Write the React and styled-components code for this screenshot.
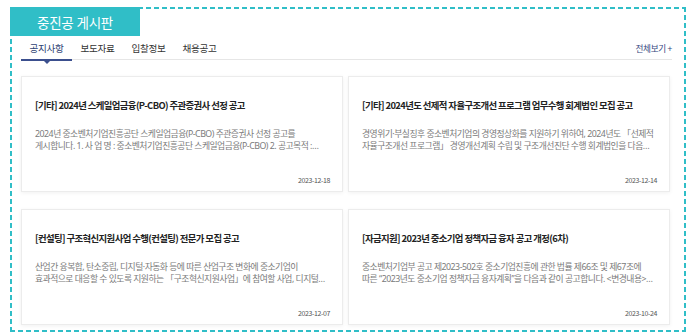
import React from 'react'
import styled, { createGlobalStyle } from 'styled-components'

const GlobalStyle = createGlobalStyle`
  html, body {
    margin: 0;
    padding: 0;
    background: #ffffff;
  }
  body {
    font-family: "Noto Sans CJK KR", "Noto Sans", sans-serif;
  }
`

const tabs = ['공지사항', '보도자료', '입찰정보', '채용공고']

const posts = [
    {
        title: '[기타] 2024년 스케일업금융(P-CBO) 주관증권사 선정 공고',
        text: '2024년 중소벤처기업진흥공단 스케일업금융(P-CBO) 주관증권사 선정 공고를 게시합니다. 1. 사 업 명 : 중소벤처기업진흥공단 스케일업금융(P-CBO) 2. 공고목적 : 스케일업금융 주관증권사 선정',
        date: '2023-12-18'
    },
    {
        title: '[기타] 2024년도 선제적 자율구조개선 프로그램 업무수행 회계법인 모집 공고',
        text: '경영위기·부실징후 중소벤처기업의 경영정상화를 지원하기 위하여, 2024년도 「선제적 자율구조개선 프로그램」 경영개선계획 수립 및 구조개선진단 수행 회계법인을 다음과 같이 모집합니다.',
        date: '2023-12-14'
    },
    {
        title: '[컨설팅] 구조혁신지원사업 수행(컨설팅) 전문가 모집 공고',
        text: '산업간 융복합, 탄소중립, 디지털·자동화 등에 따른 산업구조 변화에 중소기업이 효과적으로 대응할 수 있도록 지원하는 「구조혁신지원사업」에 참여할 사업, 디지털 전환 컨설팅 전문가를 모집합니다.',
        date: '2023-12-07'
    },
    {
        title: '[자금지원] 2023년 중소기업 정책자금 융자 공고 개정(6차)',
        text: '중소벤처기업부 공고 제2023-502호 중소기업진흥에 관한 법률 제66조 및 제67조에 따른 “2023년도 중소기업 정책자금 융자계획”을 다음과 같이 공고합니다. <변경내용> 신청기간 조정',
        date: '2023-10-24'
    }
]

function App() {
    return (
        <>
            <GlobalStyle />
            <Frame>
                <Heading>중진공 게시판</Heading>
                <TabBar>
                    <TabList>
                        {tabs.map((tab, index) => (
                            <Tab key={tab} active={index === 0}>
                                {tab}
                            </Tab>
                        ))}
                    </TabList>
                    <MoreLink>전체보기 +</MoreLink>
                </TabBar>
                <CardGrid>
                    {posts.map((post, index) => (
                        <Card key={index}>
                            <CardTitle>{post.title}</CardTitle>
                            <CardText>{post.text}</CardText>
                            <CardDate>{post.date}</CardDate>
                        </Card>
                    ))}
                </CardGrid>
            </Frame>
        </>
    )
}

export default App

const teal = '#30bec7'

const Frame = styled.div`
    box-sizing: border-box;
    margin: 7px 0 0 10px;
    width: 676px;
    height: 325px;
    padding: 0 14px 0 0;
    background:
        repeating-linear-gradient(90deg, ${teal} 0 5px, transparent 5px 8px) top left / 100% 2px no-repeat,
        repeating-linear-gradient(90deg, ${teal} 0 5px, transparent 5px 8px) bottom left / 100% 2px no-repeat,
        repeating-linear-gradient(180deg, ${teal} 0 5px, transparent 5px 8px) top left / 2px 100% no-repeat,
        repeating-linear-gradient(180deg, ${teal} 0 5px, transparent 5px 8px) top right / 2px 100% no-repeat;
`

const Heading = styled.div`
    width: 130px;
    height: 29px;
    background: ${teal};
    color: #ffffff;
    font-size: 13.5px;
    letter-spacing: -0.2px;
    display: flex;
    align-items: center;
    justify-content: center;
`

const TabBar = styled.div`
    margin-left: 11px;
    height: 23px;
    display: flex;
    align-items: stretch;
    justify-content: space-between;
    border-bottom: 1px solid #e6e6e6;
`

const TabList = styled.div`
    display: flex;
`

const Tab = styled.div`
    position: relative;
    width: 51px;
    display: flex;
    align-items: center;
    justify-content: center;
    font-size: 9.6px;
    letter-spacing: -0.3px;
    color: ${p => (p.active ? '#2d3f73' : '#333333')};
    cursor: pointer;
    ${p => p.active && `
        &::after {
            content: '';
            position: absolute;
            left: 0;
            right: 0;
            bottom: -2px;
            height: 2px;
            background: #3b4f8e;
        }
        &::before {
            content: '';
            position: absolute;
            left: 50%;
            bottom: -5px;
            margin-left: -3px;
            border-left: 3px solid transparent;
            border-right: 3px solid transparent;
            border-top: 3px solid #3b4f8e;
        }
    `}
`

const MoreLink = styled.div`
    display: flex;
    align-items: center;
    font-size: 8.6px;
    letter-spacing: -0.3px;
    color: #34467e;
    cursor: pointer;
`

const CardGrid = styled.div`
    margin: 16px 2px 0 11px;
    display: grid;
    grid-template-columns: 1fr 1fr;
    column-gap: 5px;
    row-gap: 17px;
`

const Card = styled.div`
    box-sizing: border-box;
    height: 116px;
    padding: 21px 12px 6px 13px;
    background: #ffffff;
    border: 1px solid #ececec;
    box-shadow: 0 1px 4px rgba(0, 0, 0, 0.06);
    display: flex;
    flex-direction: column;
`

const CardTitle = styled.div`
    font-size: 9.4px;
    line-height: 14px;
    font-weight: 700;
    letter-spacing: -0.6px;
    color: #222222;
    white-space: nowrap;
    overflow: hidden;
    text-overflow: ellipsis;
`

const CardText = styled.div`
    margin-top: 16px;
    font-family: "Noto Sans", "Noto Sans CJK KR", sans-serif;
    font-size: 8.8px;
    line-height: 12px;
    letter-spacing: -0.5px;
    color: #7a7a7a;
    word-break: keep-all;
    display: -webkit-box;
    -webkit-line-clamp: 2;
    -webkit-box-orient: vertical;
    overflow: hidden;
`

const CardDate = styled.div`
    margin-top: auto;
    text-align: right;
    font-size: 7px;
    letter-spacing: -0.4px;
    color: #555555;
`
